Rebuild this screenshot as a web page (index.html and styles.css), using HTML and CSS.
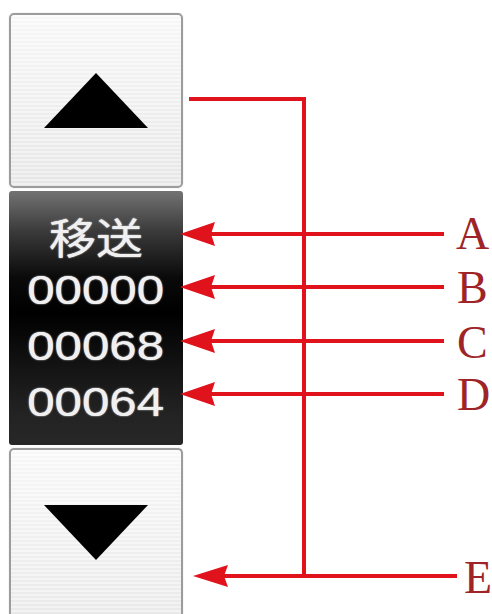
FILE: index.html
```html
<!DOCTYPE html>
<html lang="ja">
<head>
<meta charset="utf-8">
<title>Feed control</title>
<link rel="stylesheet" href="styles.css">
</head>
<body>
<div class="page">
  <div class="widget">
    <div class="btn btn-up">
      <svg class="tri" width="104" height="55" viewBox="0 0 104 55"><polygon points="52,0 104,55 0,55" fill="#000"/></svg>
    </div>
    <div class="panel">
      <div class="line cjk">移送</div>
      <div class="line num">00000</div>
      <div class="line num">00068</div>
      <div class="line num">00064</div>
    </div>
    <div class="btn btn-down">
      <svg class="tri" width="104" height="55" viewBox="0 0 104 55"><polygon points="0,0 104,0 52,55" fill="#000"/></svg>
    </div>
  </div>
  <svg class="callouts" width="492" height="614" viewBox="0 0 492 614">
    <g stroke="#e0121c" stroke-width="4" fill="none" stroke-linecap="square">
      <polyline points="191,99 304,99 304,576"/>
      <line x1="210" y1="234" x2="442" y2="234"/>
      <line x1="210" y1="287" x2="442" y2="287"/>
      <line x1="210" y1="341" x2="442" y2="341"/>
      <line x1="210" y1="394" x2="442" y2="394"/>
      <line x1="222" y1="576" x2="455" y2="576"/>
    </g>
    <g fill="#e0121c">
      <polygon points="180,234 215,222 211,234 215,246"/>
      <polygon points="180,287 215,275 211,287 215,299"/>
      <polygon points="180,341 215,329 211,341 215,353"/>
      <polygon points="180,394 215,382 211,394 215,406"/>
      <polygon points="193,576 228,565 224,576 228,587"/>
    </g>
    <g class="labels" fill="#9e2428">
      <text x="456" y="249">A</text>
      <text x="457" y="303">B</text>
      <text x="457" y="358">C</text>
      <text x="457" y="410">D</text>
      <text x="464" y="593">E</text>
    </g>
  </svg>
</div>
</body>
</html>
```

FILE: styles.css
```css
html, body {
  margin: 0;
  padding: 0;
  background: #fff;
}

.page {
  position: relative;
  width: 492px;
  height: 614px;
  overflow: hidden;
}

.widget {
  display: flex;
  flex-direction: column;
  gap: 3px;
  width: 174px;
  padding: 13px 0 0 9px;
}

.btn {
  box-sizing: border-box;
  border: 2px solid #9c9c9c;
  border-radius: 5px;
  background: repeating-linear-gradient(180deg, rgba(255,255,255,0.35) 0 2px, rgba(0,0,0,0.012) 2px 4px),
              linear-gradient(180deg, #fafafa 0%, #f0f0f0 60%, #e9e9e9 100%);
  display: flex;
  justify-content: center;
  box-shadow: 0 0 2px rgba(0,0,0,0.12);
}

.btn-up {
  height: 175px;
  align-items: center;
}

.btn-down {
  height: 200px;
  align-items: flex-start;
  padding-top: 55px;
  border-bottom: none;
  border-radius: 5px 5px 0 0;
}

.tri {
  display: block;
}

.panel {
  box-sizing: border-box;
  height: 254px;
  border-radius: 3px;
  background: linear-gradient(180deg, #737373 0%, #3a3a3a 16%, #0a0a0a 34%, #000 48%, #141414 70%, #232323 88%, #272727 100%);
  display: flex;
  flex-direction: column;
  align-items: center;
  padding-top: 19px;
  color: #f0f0f0;
  text-shadow: 0 0 1px #fff, 0 0 2px rgba(255,255,255,0.45);
}

.line {
  transform: scaleX(1.23);
  white-space: nowrap;
}

.cjk {
  font-family: "Noto Sans CJK JP", "Noto Sans CJK SC", sans-serif;
  font-size: 42px;
  line-height: 52px;
  transform: scaleX(1.12);
}

.num {
  font-family: "Liberation Sans", Arial, sans-serif;
  font-size: 40px;
  line-height: 56px;
}

.callouts {
  position: absolute;
  left: 0;
  top: 0;
}

.labels text {
  font-family: "Liberation Serif", "Times New Roman", serif;
  font-size: 46px;
}
```
